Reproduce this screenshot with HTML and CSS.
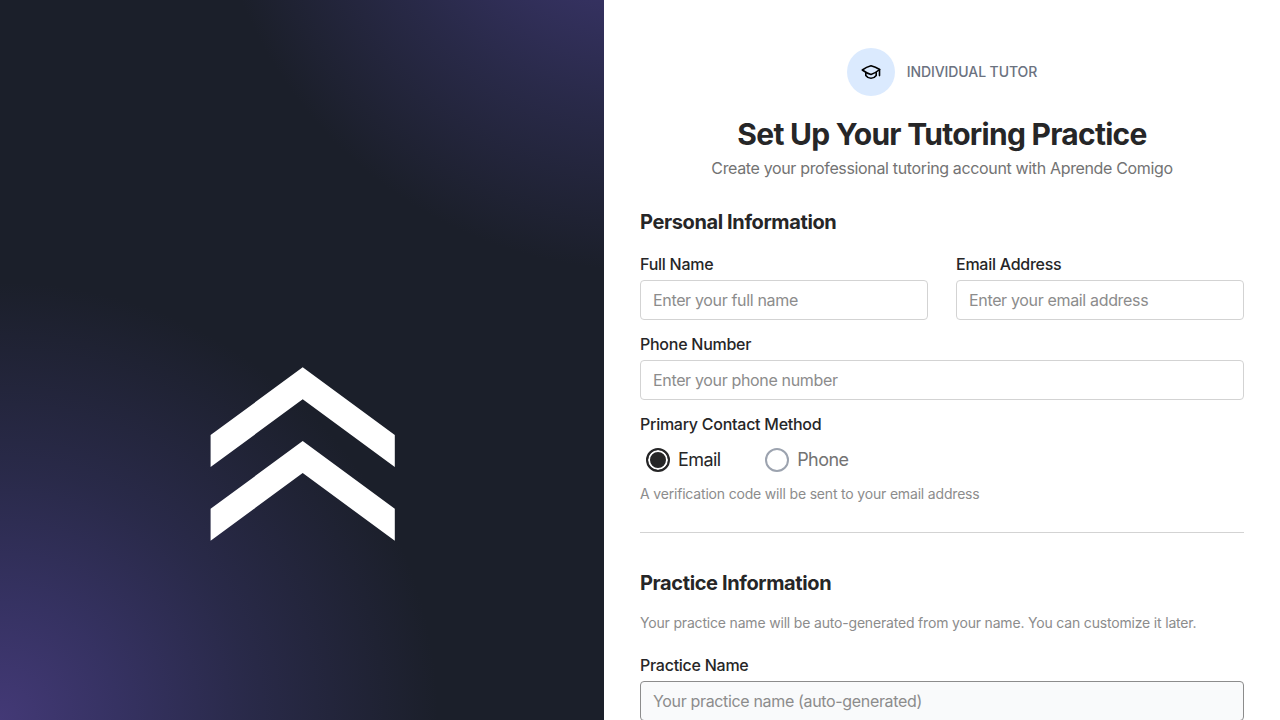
FILE: index.html
```html
<!DOCTYPE html>
<html lang="en">
<head>
<meta charset="utf-8">
<title>Aprende Comigo</title>
<link rel="stylesheet" href="styles.css">
</head>
<body>
<div class="page">
  <aside class="brand">
    <svg class="logo" width="186" height="175" viewBox="0 0 186 175" fill="#fff" aria-hidden="true">
      <path d="M.6 68 92.7 0.300 184.8 68V100L92.7 32.300 .6 100Z"/>
      <path d="M.6 141.800 92.700 74 184.800 141.800V173.800L92.700 106 .6 173.800Z"/>
    </svg>
  </aside>
  <main class="content">
    <header class="header">
      <div class="role">
        <span class="role-icon">
          <svg width="20" height="18" viewBox="0 0 20 18" fill="none" stroke="#000" stroke-width="1.600" stroke-linejoin="round" stroke-linecap="round" aria-hidden="true">
            <path d="M1.300 7Q5.500 3.900 10 2.800 14.500 3.900 18.700 6.500 14.500 10 10 11.400 5.500 10.200 1.300 7Z"/>
            <path d="M4.800 9.500V12.400Q7 15.300 10 15.300T15.200 12.400V9.500M18.500 6.800V12.600"/>
          </svg>
        </span>
        <span class="role-name">INDIVIDUAL TUTOR</span>
      </div>
      <h1 class="title">Set Up Your Tutoring Practice</h1>
      <p class="subtitle">Create your professional tutoring account with Aprende Comigo</p>
    </header>
    <section class="section">
      <h2 class="section-title">Personal Information</h2>
      <div class="row">
        <label class="field"><span class="label">Full Name</span><input class="input" placeholder="Enter your full name"></label>
        <label class="field"><span class="label">Email Address</span><input class="input" placeholder="Enter your email address"></label>
      </div>
      <label class="field"><span class="label">Phone Number</span><input class="input" placeholder="Enter your phone number"></label>
      <div class="field">
        <span class="label">Primary Contact Method</span>
        <div class="radios">
          <span class="radio checked"><i class="dot"></i><span>Email</span></span>
          <span class="radio"><i class="dot"></i><span>Phone</span></span>
        </div>
        <p class="help">A verification code will be sent to your email address</p>
      </div>
    </section>
    <hr class="divider">
    <section class="section">
      <h2 class="section-title">Practice Information</h2>
      <p class="help note">Your practice name will be auto-generated from your name. You can customize it later.</p>
      <label class="field"><span class="label">Practice Name</span><input class="input generated" placeholder="Your practice name (auto-generated)"></label>
    </section>
  </main>
</div>
</body>
</html>
```
FILE: styles.css
```css
* { box-sizing: border-box; margin: 0; padding: 0; }
body { height: 720px; overflow: hidden; background: #fff; color: #262627; font-family: Inter, "Liberation Sans", sans-serif; font-size: 16px; line-height: 24px; }
.page { display: flex; height: 720px; overflow: hidden; }
.brand {
  flex: none; width: 604px; height: 720px; padding: 367px 0 0 210px;
  background:
    radial-gradient(circle at 0 100%, #433976 0, rgba(58, 53, 107, .86) 120px, rgba(52, 50, 97, .56) 250px, rgba(48, 46, 90, 0) 438px),
    radial-gradient(circle at 640px -160px, #433976 0, rgba(58, 53, 107, .87) 150px, rgba(52, 50, 97, .56) 270px, rgba(48, 46, 90, 0) 430px),
    #1b1f2a;
}
.logo { display: block; }
.content { flex: 1; padding: 48px 36px 0; }
.header { display: flex; flex-direction: column; align-items: center; }
.role { display: flex; align-items: center; gap: 12px; }
.role-icon { display: flex; align-items: center; justify-content: center; width: 48px; height: 48px; border-radius: 50%; background: #dbeafe; }
.role-name { padding-bottom: 2px; color: #6b7280; font-size: 14px; font-weight: 500; line-height: 21px; letter-spacing: -.1px; }
.title { margin-top: 19px; font-size: 30px; font-weight: 700; line-height: 38px; letter-spacing: -.73px; white-space: nowrap; }
.subtitle { margin-top: 3px; height: 24px; color: #737373; letter-spacing: -.35px; white-space: nowrap; }
.section-title { font-size: 20px; font-weight: 700; line-height: 30px; letter-spacing: -.38px; }
.header + .section { margin-top: 27px; }
.section-title + .row { margin-top: 15px; }
.row { display: grid; grid-template-columns: 1fr 1fr; gap: 28px; }
.field { display: block; }
.section > .field { margin-top: 12px; }
.label { display: block; height: 28px; line-height: 24px; font-weight: 500; letter-spacing: -.26px; }
.input { display: block; width: 100%; height: 40px; padding: 0 12px; border: 1px solid #d3d3d3; border-radius: 4px; background: #fff; font: inherit; letter-spacing: -.34px; color: #262627; }
.input::placeholder { color: #8c8c8c; opacity: 1; }
.radios { display: flex; height: 40px; align-items: center; gap: 44.500px; padding-left: 6px; font-size: 18px; letter-spacing: -.55px; color: #737373; }
.radio { display: flex; align-items: center; gap: 8px; }
.dot { width: 24px; height: 24px; border: 2px solid #9ca3af; border-radius: 50%; }
.checked { color: #262627; }
.checked .dot { border-color: #262627; background: #262627; box-shadow: inset 0 0 0 2px #fff; }
.help { color: #8c8c8c; font-size: 14px; line-height: 21px; letter-spacing: -.18px; white-space: nowrap; }
.radios + .help { margin-top: 3px; }
.divider { margin: 28px 0 35px; border: 0; border-top: 1px solid #d3d3d3; }
.note { margin: 14px 0 20px; }
.section > .note + .field { margin-top: 0; }
.generated { border-color: #8c8c8c; background: #f9fafb; }
```
